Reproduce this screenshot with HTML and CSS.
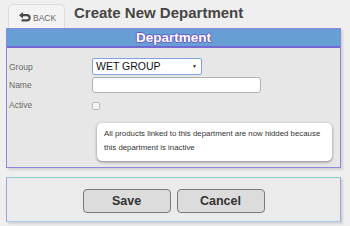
FILE: index.html
```html
<!DOCTYPE html>
<html>
<head>
<meta charset="utf-8">
<link rel="stylesheet" href="styles.css">
</head>
<body>
<div class="page">
  <div class="topbar">
    <div class="back">
      <svg class="back-icon" width="12" height="10" viewBox="0 0 12 10">
        <path d="M1.5 3.2 H8 A2.6 2.6 0 0 1 8 8.4 H2.5" fill="none" stroke="#4a4a4a" stroke-width="2.2"/>
        <path d="M0 3.2 L4 0 L4 6.4 Z" fill="#4a4a4a"/>
      </svg>
      <span class="back-text">BACK</span>
    </div>
    <h1 class="title">Create New Department</h1>
  </div>
  <div class="panel">
    <div class="panel-head">Department</div>
    <div class="panel-body">
      <div class="form">
        <label class="label">Group</label>
        <div class="select">WET GROUP<span class="caret">▼</span></div>
        <label class="label">Name</label>
        <div class="input"></div>
        <label class="label">Active</label>
        <div class="check-cell"><span class="checkbox"></span></div>
      </div>
      <div class="tooltip">All products linked to this department are now hidded because this department is inactive</div>
    </div>
  </div>
  <div class="footer">
    <button class="btn">Save</button>
    <button class="btn">Cancel</button>
  </div>
</div>
</body>
</html>
```
FILE: styles.css
```css
html, body {
  margin: 0;
  padding: 0;
  background: #efefef;
  font-family: "Liberation Sans", Arial, sans-serif;
}
.page {
  width: 350px;
  height: 226px;
  padding: 0 9px 0 6px;
  box-sizing: border-box;
  background: #efefef;
}
.topbar {
  height: 28px;
  display: flex;
  align-items: flex-end;
}
.back {
  margin-left: 2px;
  width: 57px;
  height: 24px;
  box-sizing: border-box;
  border: 1px solid #dcdcdc;
  border-bottom: none;
  border-radius: 5px 5px 0 0;
  background: #f3f3f3;
  display: flex;
  align-items: center;
  padding-left: 10px;
  padding-top: 1px;
}
.back-icon {
  display: block;
  margin-right: 2px;
}
.back-text {
  font-size: 8.5px;
  color: #666;
  margin-top: 2px;
}
.title {
  margin: 0 0 7px 9px;
  font-size: 15px;
  font-weight: bold;
  color: #464646;
  line-height: 17px;
}
.panel {
  border: 1px solid #8c88dc;
  background: #e7e7e7;
  box-shadow: 2px 2px 2px rgba(0,0,0,0.12);
}
.panel-head {
  height: 17px;
  background: #679ed3;
  border-bottom: 2px solid #7468d2;
  color: #fff;
  font-weight: bold;
  font-size: 13.5px;
  line-height: 17px;
  text-align: center;
  text-shadow: -1px 0 #6a5acd, 1px 0 #6a5acd, 0 -1px #6a5acd, 0 1px #6a5acd;
}
.panel-body {
  padding: 10px 0 6px 2px;
}
.form {
  display: grid;
  grid-template-columns: 83px 1fr;
  row-gap: 2px;
  align-items: center;
}
.label {
  font-size: 8.5px;
  color: #6a6a6a;
}
.select {
  width: 110px;
  height: 17px;
  box-sizing: border-box;
  border: 1px solid #7ea6dc;
  border-radius: 2px;
  background: #fff;
  font-size: 10.5px;
  line-height: 15px;
  padding-left: 3px;
  color: #111;
  position: relative;
}
.caret {
  position: absolute;
  right: 4px;
  top: 0;
  font-size: 5px;
  color: #222;
}
.input {
  width: 169px;
  height: 16px;
  box-sizing: border-box;
  border: 1px solid #b0b0b0;
  border-radius: 3px;
  background: #fff;
}
.check-cell {
  height: 17px;
  display: flex;
  align-items: center;
  padding-top: 2px;
}
.checkbox {
  width: 6px;
  height: 6px;
  border: 1px solid #bdbdbd;
  border-radius: 1px;
  background: #f2f2f2;
}
.tooltip {
  margin: 9px 0 0 88px;
  width: 235px;
  height: 38px;
  box-sizing: border-box;
  padding: 4px 4px 0 7px;
  background: #fff;
  border-radius: 5px;
  box-shadow: 0 1px 3px rgba(0,0,0,0.45);
  font-size: 7.85px;
  line-height: 14px;
  color: #333;
}
.footer {
  margin-top: 9px;
  height: 45px;
  box-sizing: border-box;
  border: 1px solid #a4a0e0;
  border-top-color: #88cccc;
  border-bottom-color: #a8c6ec;
  background: #ebebeb;
  box-shadow: 2px 2px 2px rgba(0,0,0,0.12);
  display: flex;
  justify-content: center;
  gap: 6px;
  padding-top: 11px;
}
.btn {
  width: 88px;
  height: 24px;
  border: 1px solid #7a7a7a;
  border-radius: 4px;
  background: #dcdcdc;
  font-family: "Liberation Sans", Arial, sans-serif;
  font-weight: bold;
  font-size: 12.5px;
  color: #333;
  padding: 0;
}
```
